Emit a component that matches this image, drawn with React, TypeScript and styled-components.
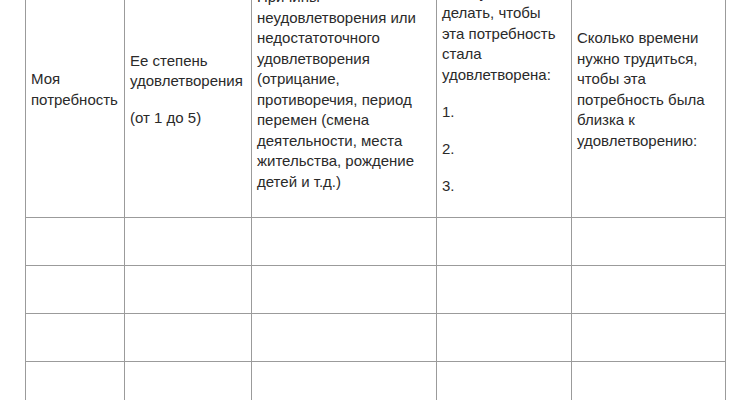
import * as React from 'react'
import styled, { createGlobalStyle } from 'styled-components'

const GlobalStyle = createGlobalStyle`
  html, body {
    margin: 0;
    padding: 0;
    background: #fff;
  }
`

const Page = styled.div`
  height: 400px;
  overflow: hidden;
  padding-left: 25px;
`

const Table = styled.table`
  margin-top: -39px;
  width: 700px;
  table-layout: fixed;
  border-collapse: collapse;
  font-family: 'Liberation Sans', Arial, sans-serif;
  font-size: 15px;
  line-height: 20.5px;
  color: #2a2a2a;
`

const Col = styled.col<{ $w: number }>`
  width: ${p => p.$w}px;
`

const HeadRow = styled.tr`
  height: 256px;
`

const BodyRow = styled.tr`
  height: 48px;
`

const Cell = styled.td`
  border: 1px solid #9b9b9b;
  padding: 0 5px;
  vertical-align: middle;
`

const Para = styled.p`
  margin: 0;

  & + & {
    margin-top: 16.5px;
  }
`

const widths = [99, 127, 185, 135, 154]

export default function App() {
  return (
    <Page>
      <GlobalStyle />
      <Table>
        <colgroup>
          {widths.map((w, i) => <Col key={i} $w={w} />)}
        </colgroup>
        <tbody>
          <HeadRow>
            <Cell>
              <Para>Моя потребность</Para>
            </Cell>
            <Cell>
              <Para>Ее степень удовлетворения</Para>
              <Para>(от 1 до 5)</Para>
            </Cell>
            <Cell>
              <Para>
                Причины неудовлетворения или недостатоточного удовлетворения
                (отрицание, противоречия, период перемен (смена деятельности,
                места жительства, рождение детей и т.д.)
              </Para>
            </Cell>
            <Cell>
              <Para>Что нужно делать, чтобы эта потребность стала удовлетворена:</Para>
              <Para>1.</Para>
              <Para>2.</Para>
              <Para>3.</Para>
            </Cell>
            <Cell>
              <Para>
                Сколько времени нужно трудиться, чтобы эта потребность была
                близка к удовлетворению:
              </Para>
            </Cell>
          </HeadRow>
          {[0, 1, 2, 3].map(r => (
            <BodyRow key={r}>
              {widths.map((_, c) => <Cell key={c} />)}
            </BodyRow>
          ))}
        </tbody>
      </Table>
    </Page>
  )
}
